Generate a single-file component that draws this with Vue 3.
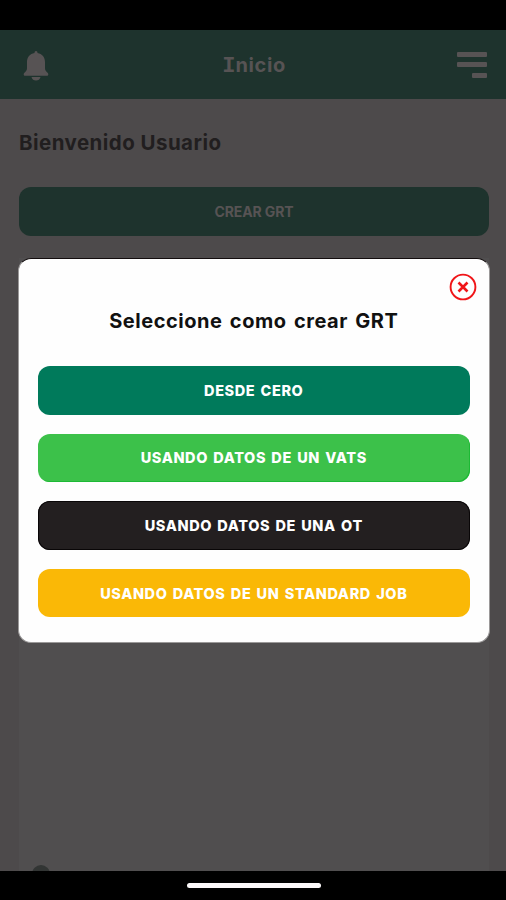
<script setup>
import { ref } from 'vue'

const showModal = ref(true)

const options = [
  { id: 'cero', label: 'DESDE CERO' },
  { id: 'vats', label: 'USANDO DATOS DE UN VATS' },
  { id: 'ot', label: 'USANDO DATOS DE UNA OT' },
  { id: 'job', label: 'USANDO DATOS DE UN STANDARD JOB' }
]
</script>

<template>
  <div class="phone">
    <div class="status-bar"></div>

    <header class="header">
      <svg class="bell" viewBox="0 0 26 30">
        <path d="M13 0c1 0 1.5.8 1.5 1.9 4.6.8 7.5 4.4 7.5 9.1v6c0 2 .8 3.3 2.3 4.6.7.6 1 1.1 1 1.8 0 .8-.6 1.3-1.5 1.3H2.2c-.9 0-1.5-.5-1.5-1.3 0-.7.3-1.2 1-1.8C3.2 20.3 4 19 4 17v-6c0-4.7 2.9-8.3 7.5-9.1C11.5.8 12 0 13 0z" />
        <path d="M8.5 26h9c-.5 2.3-2.3 3.6-4.5 3.6S9 28.3 8.5 26z" />
      </svg>
      <h1 class="title"><span class="title-cap">I</span>nicio</h1>
      <div class="menu">
        <span></span>
        <span></span>
        <span class="short"></span>
      </div>
    </header>

    <main class="content">
      <h2 class="welcome">Bienvenido Usuario</h2>
      <button class="create" @click="showModal = true">CREAR GRT</button>
      <div class="panel">
        <div class="dot"></div>
      </div>
    </main>

    <footer class="nav-bar">
      <div class="handle"></div>
    </footer>

    <div v-if="showModal" class="modal">
      <button class="close" @click="showModal = false">
        <svg viewBox="0 0 28 28">
          <circle cx="14" cy="14" r="12.4" />
          <path d="M9.5 9.5l9 9M18.5 9.5l-9 9" />
        </svg>
      </button>
      <h3 class="modal-title">Seleccione como crear GRT</h3>
      <div class="options">
        <button v-for="option in options" :key="option.id" class="option" :class="option.id">
          <span>{{ option.label }}</span>
        </button>
      </div>
    </div>
  </div>
</template>

<style>
body {
  background: #000;
}
</style>

<style scoped>
.phone {
  position: relative;
  display: flex;
  flex-direction: column;
  width: 506px;
  height: 900px;
  overflow: hidden;
  background: #4d4a4b;
  font-family: 'Inter', sans-serif;
}

h1,
h2,
h3 {
  margin: 0;
}

button {
  padding: 0;
  border: none;
  font-family: inherit;
}

.status-bar {
  flex: none;
  height: 30px;
  background: #000;
}

.header {
  flex: none;
  display: grid;
  grid-template-columns: 60px 1fr 60px;
  align-items: center;
  box-sizing: border-box;
  height: 69px;
  padding: 0 19px 0 23px;
  background: #1e332d;
}

.bell {
  width: 26px;
  height: 30px;
  margin-top: 2px;
  fill: #575354;
}

.title {
  padding: 2px 2px 0 0;
  color: #575354;
  font-size: 20px;
  font-weight: 700;
  line-height: 30px;
  letter-spacing: 0.6px;
  text-align: center;
}

.title-cap {
  font-family: 'Liberation Mono', monospace;
  font-size: 22px;
  letter-spacing: 0;
}

.menu {
  display: flex;
  flex-direction: column;
  align-items: flex-end;
  gap: 5.5px;
}

.menu span {
  width: 30px;
  height: 5px;
  border-radius: 1px;
  background: #575354;
}

.menu .short {
  width: 15px;
}

.content {
  flex: 1;
  display: flex;
  flex-direction: column;
  min-height: 0;
  padding: 0 17px 0 19px;
}

.welcome {
  margin-top: 29px;
  color: #211e1f;
  font-size: 20.5px;
  font-weight: 700;
  line-height: 30px;
  letter-spacing: 0.45px;
  white-space: nowrap;
}

.create {
  flex: none;
  height: 49px;
  margin-top: 29px;
  border-radius: 12px;
  background: #1e332d;
  color: #575354;
  font-size: 14px;
  font-weight: 700;
  letter-spacing: -0.1px;
}

.panel {
  flex: 1;
  display: flex;
  align-items: flex-end;
  margin-top: 22px;
  overflow: hidden;
  background: #504e4f;
}

.dot {
  width: 18px;
  height: 18px;
  margin: 0 0 -12px 13px;
  border-radius: 50%;
  background: #323534;
}

.nav-bar {
  flex: none;
  display: flex;
  justify-content: center;
  height: 29px;
  background: #000;
}

.handle {
  width: 134px;
  height: 5px;
  margin: 12px 0 0 1px;
  border-radius: 3px;
  background: #fbf8f9;
}

/* dialog over the dimmed page */
.modal {
  position: absolute;
  top: 258px;
  left: 18px;
  display: flex;
  flex-direction: column;
  box-sizing: border-box;
  width: 472px;
  height: 385px;
  padding: 14px 19px 0 18.5px;
  border: 1px solid #9b9999;
  border-top-color: #130d0e;
  border-radius: 13px;
  background: #fefefe;
}

.close {
  align-self: flex-end;
  width: 28px;
  height: 28px;
  margin-right: -7px;
  background: none;
}

.close svg {
  display: block;
  fill: none;
  stroke: #f01518;
  stroke-width: 1.9;
}

.close path {
  stroke-width: 2.6;
}

.modal-title {
  margin-top: 5px;
  color: #111;
  font-size: 20px;
  font-weight: 700;
  line-height: 30px;
  letter-spacing: 0.55px;
  word-spacing: 2px;
  text-align: center;
  white-space: nowrap;
}

.options {
  display: flex;
  flex-direction: column;
  gap: 19px;
  margin-top: 30px;
}

.option {
  height: 48.6px;
  border-radius: 12px;
  color: #fff;
  font-size: 14.5px;
  font-weight: 800;
  letter-spacing: 0.6px;
  word-spacing: 1.5px;
  white-space: nowrap;
}

.cero {
  background: #007a5b;
}

.vats {
  background: #3cc14a;
  box-shadow: inset -1px -1px 0 #1dba35;
}

.ot {
  background: #231f20;
  box-shadow: inset 0 0 0 1px #090607;
}

.job {
  background: #fab806;
}
</style>
